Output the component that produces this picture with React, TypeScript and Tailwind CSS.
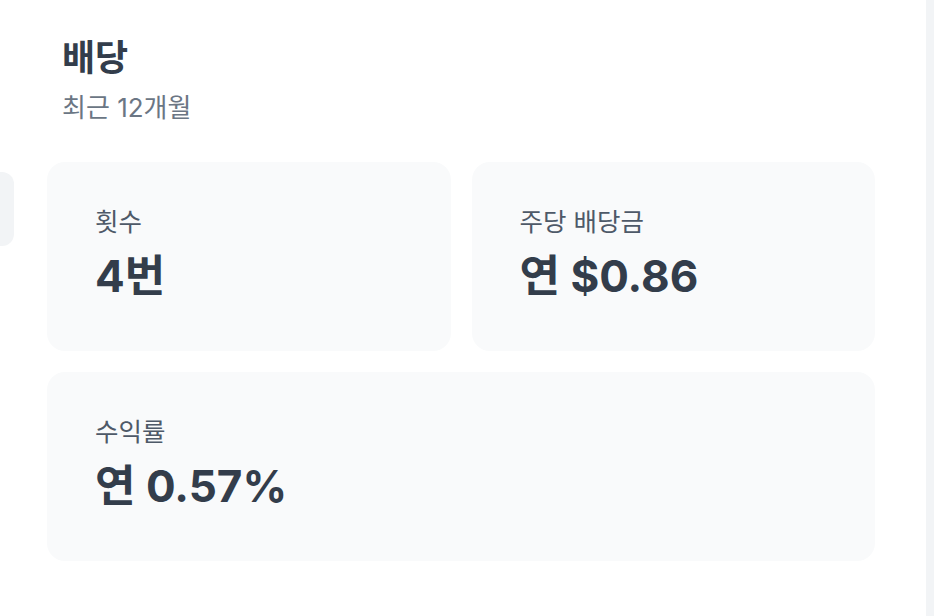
const font = "font-['Inter','Noto_Sans_CJK_KR',sans-serif]";

interface StatProps {
  label: string;
  value: string;
  wide?: boolean;
}

const Stat = ({ label, value, wide }: StatProps) => (
  <div
    className={`flex flex-col rounded-[18px] bg-[#f9fafb] h-[189px] pl-[48px] pt-[43px] ${
      wide ? "col-span-2" : ""
    }`}
  >
    <span className="text-[25.5px] leading-[34px] text-[#4e5968]">{label}</span>
    <span className="mt-[10px] text-[44px] leading-[54px] font-bold text-[#333d4b]">
      {value}
    </span>
  </div>
);

export default function App() {
  return (
    <div className={`flex h-[616px] w-[934px] bg-white ${font}`}>
      <div className="w-[14px] shrink-0">
        <div className="mt-[172px] h-[74px] rounded-r-[12px] bg-[#f2f4f6]" />
      </div>
      <main className="ml-[33px] w-[828px] shrink-0">
        <header className="pl-[15px] pt-[34px]">
          <h1 className="text-[36px] leading-[48px] font-bold text-[#333d4b]">배당</h1>
          <p className="mt-[9px] text-[26px] leading-[34px] text-[#6b7684]">최근 12개월</p>
        </header>
        <div className="mt-[37px] grid grid-cols-2 gap-[21px]">
          <Stat label="횟수" value="4번" />
          <Stat label="주당 배당금" value="연 $0.86" />
          <Stat label="수익률" value="연 0.57%" wide />
        </div>
      </main>
      <div className="ml-auto w-[8px] bg-[#f2f4f6]" />
    </div>
  );
}
